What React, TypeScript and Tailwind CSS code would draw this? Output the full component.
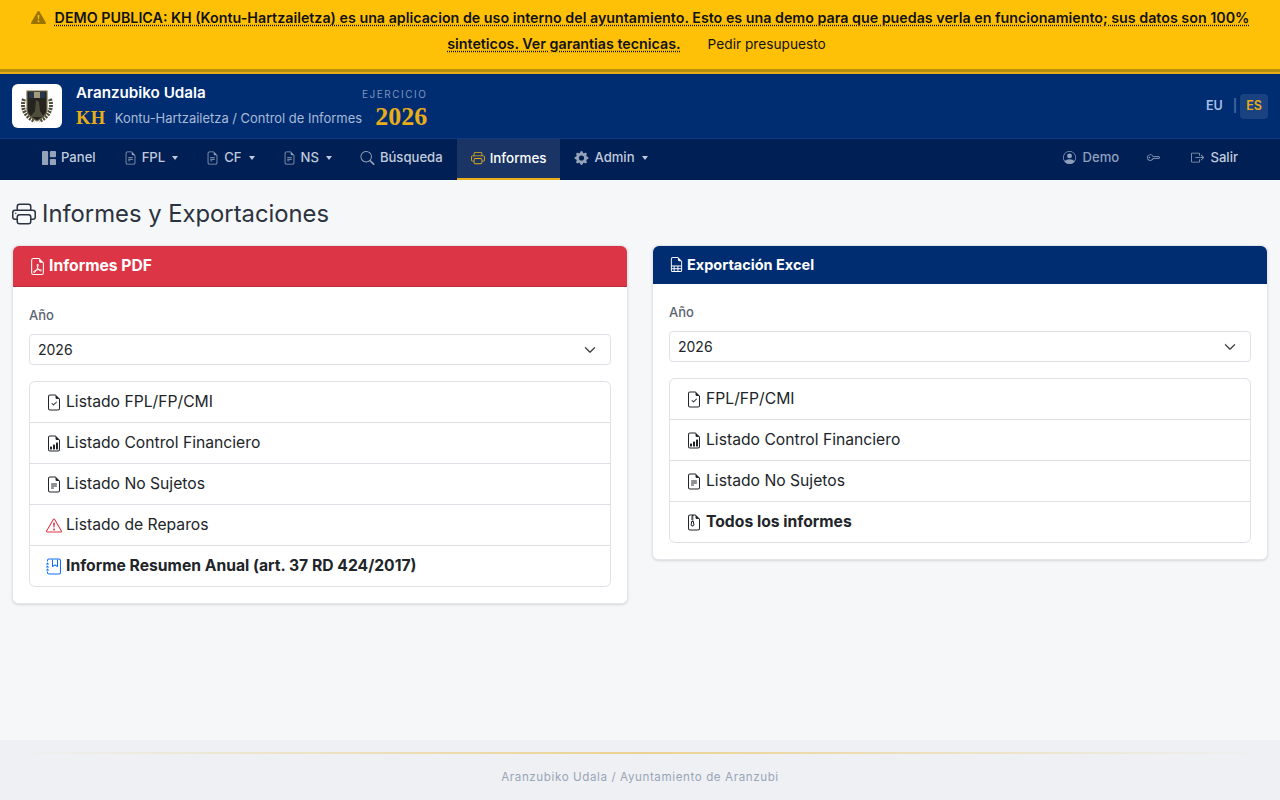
import { FC, ReactNode } from "react";
import {
  BsBoxArrowRight,
  BsChevronDown,
  BsExclamationTriangle,
  BsExclamationTriangleFill,
  BsFileEarmarkBarGraph,
  BsFileEarmarkCheck,
  BsFileEarmarkPdf,
  BsFileEarmarkSpreadsheet,
  BsFileEarmarkText,
  BsFileEarmarkZip,
  BsGearFill,
  BsGrid1X2Fill,
  BsJournalBookmark,
  BsKey,
  BsPersonCircle,
  BsPrinter,
  BsSearch,
} from "react-icons/bs";

const Caret: FC = () => (
  <span className="ml-[7px] inline-block border-x-[3px] border-t-[4px] border-x-transparent border-t-current" />
);

const Crest: FC = () => (
  <svg viewBox="0 0 36 36" className="w-[36px] h-[36px]">
    <path d="M5 11c-3 9 1 18 11 22M31 11c3 9-1 18-11 22" fill="none" stroke="#4d4a35" strokeWidth="4" strokeDasharray="2 1" />
    <path d="M8 3h20v19c0 6-6 9-10 11-4-2-10-5-10-11z" fill="#25241e" stroke="#7d7153" strokeWidth="1.2" />
    <rect x="10" y="4" width="5" height="6" fill="#2a3650" />
    <rect x="15" y="4" width="6" height="6" fill="#a39a78" />
    <rect x="21" y="4" width="5" height="6" fill="#2a3650" />
    <path d="M17 12l3 2 1 9 4 6H11l5-6z" fill="#4f4d3c" />
  </svg>
);

const NavItem: FC<{ icon: ReactNode; label: string; caret?: boolean; active?: boolean }> = ({ icon, label, caret, active }) => (
  <a
    className={
      "flex items-center h-full px-[14px] pb-[1px] font-medium border-b-2 " +
      (active ? "bg-white/10 text-[13.4px] text-white border-[#e8ad17]" : "text-[13.1px] text-[#c0cbdd] border-transparent")
    }
  >
    <span className={"mr-[5px] text-[14px] " + (active ? "text-[#e8ad17]" : "text-[#94a3b8]")}>{icon}</span>
    {label}
    {caret && <Caret />}
  </a>
);

const ListRow: FC<{ icon: ReactNode; label: string; bold?: boolean }> = ({ icon, label, bold }) => (
  <a className={"flex items-center h-[41px] px-4 text-[15.7px] text-[#212529] border-b border-[#dee2e6] last:border-b-0 last:h-[40px] " + (bold ? "font-bold" : "")}>
    <span className="mr-1 flex w-4 justify-center text-[17px]">{icon}</span>
    {label}
  </a>
);

const YearSelect: FC = () => (
  <div className="mb-4">
    <div className="mb-[9px] text-[13px] leading-5 font-medium text-[#5a6472]">Año</div>
    <div className="flex h-[31px] items-center justify-between rounded border border-[#dee2e6] bg-white pl-2 pr-[14px] text-[14px] text-[#212529]">
      2026
      <BsChevronDown className="text-[12px]" strokeWidth={0.8} />
    </div>
  </div>
);

const App: FC = () => {
  return (
    <div className="flex min-h-[800px] flex-col bg-[#f6f7f9] font-['Inter','Liberation_Sans',sans-serif]">
      <div className="h-[69px] bg-[#ffc107] px-4 pt-[5px] text-center text-[14.27px] leading-[26px] text-[#111]">
        <BsExclamationTriangleFill className="mr-[9px] inline-block align-[-2px] text-[15px] text-[#997404]" />
        <span className="font-semibold underline decoration-dotted underline-offset-2">
          DEMO PUBLICA: KH (Kontu-Hartzailetza) es una aplicacion de uso interno del ayuntamiento. Esto es una demo para que puedas verla en funcionamiento; sus datos son 100%
        </span>{" "}
        <span className="font-semibold underline decoration-dotted underline-offset-2">sinteticos. Ver garantias tecnicas.</span>
        <span className="ml-[27px] mr-[7px] text-[13.7px]">Pedir presupuesto</span>
      </div>
      <div className="h-[3px] bg-[#b8900f]" />
      <div className="h-[2px] bg-[#e8ad17]" />

      <header className="flex h-[65px] items-center justify-between border-b border-[#0b3a80] bg-[#002d72] pl-3 pr-3">
        <div className="flex items-center">
          <div className="mr-[14px] flex h-11 w-[50px] items-center justify-center rounded-md bg-white">
            <Crest />
          </div>
          <div>
            <div className="mt-[1px] text-[15.2px] leading-5 font-semibold text-white">Aranzubiko Udala</div>
            <div className="mt-[3px] flex items-center">
              <span className="mr-[9px] font-['Liberation_Serif',serif] text-[18.5px] leading-6 font-bold tracking-wide text-[#e8ad17]">KH</span>
              <span className="mt-[2px] text-[12.95px] text-[#a9bad6]">Kontu-Hartzailetza / Control de Informes</span>
            </div>
          </div>
          <div className="mt-[5px] text-right">
            <div className="text-[10px] leading-3 tracking-[1.5px] text-[#7f93b8]">EJERCICIO</div>
            <div className="mt-[5px] font-['Liberation_Serif',serif] text-[26px] leading-6 font-bold text-[#e8ad17]">2026</div>
          </div>
        </div>
        <div className="flex items-center text-[12.5px] font-semibold">
          <span className="pl-[6px] pr-[8px] text-[#a9c0e4]">EU</span>
          <span className="mx-[2px] text-[#4a6da3]">|</span>
          <span className="ml-[1px] flex h-[25px] items-center rounded bg-white/10 px-[6px] text-[#e8ad17]">ES</span>
        </div>
      </header>

      <nav className="flex h-[41px] justify-between bg-[#001f54] pl-[28px] pr-[42px]">
        <div className="flex items-center h-full">
          <NavItem icon={<BsGrid1X2Fill />} label="Panel" />
          <NavItem icon={<BsFileEarmarkText className="w-[13px]" />} label="FPL" caret />
          <NavItem icon={<BsFileEarmarkText className="w-[13px]" />} label="CF" caret />
          <NavItem icon={<BsFileEarmarkText className="w-[13px]" />} label="NS" caret />
          <NavItem icon={<BsSearch className="w-[15px]" />} label="Búsqueda" />
          <NavItem icon={<BsPrinter />} label="Informes" active />
          <NavItem icon={<BsGearFill className="w-[15px]" />} label="Admin" caret />
        </div>
        <div className="flex items-center pb-[3px] text-[13.1px] font-medium">
          <span className="flex items-center text-[#8fa0bd]">
            <BsPersonCircle className="mr-[6px]" />
            Demo
          </span>
          <BsKey className="ml-7 text-[#8fa0bd]" />
          <span className="ml-[31px] flex items-center text-[#c0cbdd]">
            <BsBoxArrowRight className="mr-[6px] text-[#94a3b8]" />
            Salir
          </span>
        </div>
      </nav>

      <main className="flex-1 px-3 pt-[19px]">
        <h1 className="mb-[17px] flex h-[29px] items-center text-[23.8px] font-normal text-[#2b3240]">
          <BsPrinter className="mr-[6px] text-[24px]" />
          Informes y Exportaciones
        </h1>
        <div className="grid grid-cols-2 items-start gap-6">
          <section className="rounded-md border border-[#e3e6ea] bg-white shadow-sm">
            <div className="flex h-[41px] items-center rounded-t-md border-b border-[#c22c3a] bg-[#dc3545] px-4 text-[15.7px] font-bold text-white">
              <BsFileEarmarkPdf className="mr-[3px] text-[17px]" />
              Informes PDF
            </div>
            <div className="p-4 pt-[18px]">
              <YearSelect />
              <div className="overflow-hidden rounded-md border border-[#dee2e6]">
                <ListRow icon={<BsFileEarmarkCheck />} label="Listado FPL/FP/CMI" />
                <ListRow icon={<BsFileEarmarkBarGraph />} label="Listado Control Financiero" />
                <ListRow icon={<BsFileEarmarkText />} label="Listado No Sujetos" />
                <ListRow icon={<BsExclamationTriangle className="text-[#dc3545]" />} label="Listado de Reparos" />
                <ListRow icon={<BsJournalBookmark className="text-[#0d6efd]" />} label="Informe Resumen Anual (art. 37 RD 424/2017)" bold />
              </div>
            </div>
          </section>
          <section className="rounded-md border border-[#e3e6ea] bg-white shadow-sm">
            <div className="flex h-[38px] items-center rounded-t-md bg-[#002d72] px-4 pb-[1px] text-[14.5px] font-bold text-white">
              <BsFileEarmarkSpreadsheet className="mr-[3px] text-[15px]" />
              Exportación Excel
            </div>
            <div className="p-4 pt-[18px]">
              <YearSelect />
              <div className="overflow-hidden rounded-md border border-[#dee2e6]">
                <ListRow icon={<BsFileEarmarkCheck />} label="FPL/FP/CMI" />
                <ListRow icon={<BsFileEarmarkBarGraph />} label="Listado Control Financiero" />
                <ListRow icon={<BsFileEarmarkText />} label="Listado No Sujetos" />
                <ListRow icon={<BsFileEarmarkZip />} label="Todos los informes" bold />
              </div>
            </div>
          </section>
        </div>
      </main>

      <footer className="h-[60px] bg-[#eef0f3] px-[13px] pt-3">
        <div className="h-[2px] bg-gradient-to-r from-transparent via-[#ecd28f] to-transparent" />
        <div className="mt-[15px] text-center text-[11.6px] leading-4 tracking-[0.6px] text-[#9aa5b8]">
          Aranzubiko Udala / Ayuntamiento de Aranzubi
        </div>
      </footer>
    </div>
  );
};

export default App;
